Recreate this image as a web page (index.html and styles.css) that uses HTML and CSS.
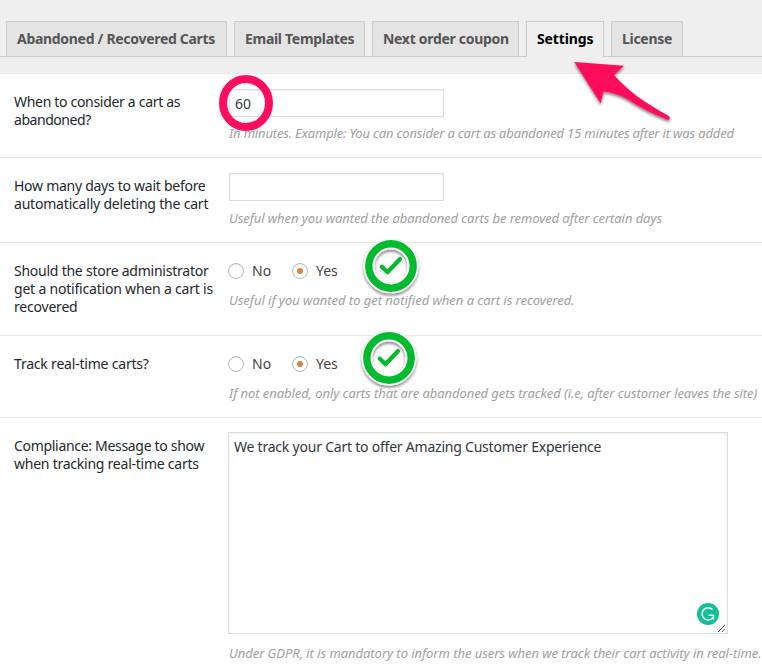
FILE: index.html
```html
<!DOCTYPE html>
<html lang="en">
<head>
<meta charset="utf-8">
<title>Settings</title>
<link rel="stylesheet" href="styles.css">
</head>
<body>
<nav class="tabs">
  <a class="tab tab-carts">Abandoned / Recovered Carts</a>
  <a class="tab tab-email">Email Templates</a>
  <a class="tab tab-coupon">Next order coupon</a>
  <a class="tab tab-settings active">Settings</a>
  <a class="tab tab-license">License</a>
</nav>
<main class="settings">
  <section class="row row-minutes">
    <div class="label"><span class="l1">When to consider a cart as</span><br><span class="l2">abandoned?</span></div>
    <div class="field">
      <input class="text" type="text" value="60">
      <p class="hint h1">In minutes. Example: You can consider a cart as abandoned 15 minutes after it was added</p>
    </div>
  </section>
  <section class="row row-days">
    <div class="label"><span class="l3">How many days to wait before</span><br><span class="l4">automatically deleting the cart</span></div>
    <div class="field">
      <input class="text" type="text">
      <p class="hint h2">Useful when you wanted the abandoned carts be removed after certain days</p>
    </div>
  </section>
  <section class="row row-notify">
    <div class="label"><span class="l5">Should the store administrator</span><br><span class="l6">get a notification when a cart is</span><br><span class="l7">recovered</span></div>
    <div class="field">
      <div class="radios"><i class="radio"></i><span class="no">No</span><i class="radio on"></i><span>Yes</span></div>
      <p class="hint h3">Useful if you wanted to get notified when a cart is recovered.</p>
    </div>
  </section>
  <section class="row row-track">
    <div class="label"><span class="l8">Track real-time carts?</span></div>
    <div class="field">
      <div class="radios"><i class="radio"></i><span class="no">No</span><i class="radio on"></i><span>Yes</span></div>
      <p class="hint h4">If not enabled, only carts that are abandoned gets tracked (i.e, after customer leaves the site)</p>
    </div>
  </section>
  <section class="row row-message">
    <div class="label"><span class="l9">Compliance: Message to show</span><br><span class="l10">when tracking real-time carts</span></div>
    <div class="field">
      <div class="area"><span class="message">We track your Cart to offer Amazing Customer Experience</span>
        <svg class="badge" width="22" height="22" viewBox="0 0 22 22"><circle cx="11" cy="11" r="11" fill="#11c096"/><path d="M15.6 6.6A6.100 6.100 0 1 0 16 14.600M11.600 12.300H16.400V16.400" fill="none" stroke="#fff" stroke-width="1.500"/></svg>
        <svg class="grip" width="9" height="9" viewBox="0 0 9 9"><path d="M1 8L8 1M5 8L8 5" stroke="#555" fill="none"/></svg>
      </div>
      <p class="hint h5">Under GDPR, it is mandatory to inform the users when we track their cart activity in real-time.</p>
    </div>
  </section>
</main>
<svg class="notes" width="762" height="671" viewBox="0 0 762 671">
  <defs>
    <filter id="shadow" x="-20%" y="-20%" width="140%" height="150%"><feDropShadow dx="0" dy="2" stdDeviation="1.6" flood-color="#000" flood-opacity=".5"/></filter>
    <g id="check">
      <g filter="url(#shadow)"><circle r="22" fill="none" stroke="#fff" stroke-width="11"/></g>
      <circle r="22.2" fill="none" stroke="#00bb2e" stroke-width="7.4"/>
      <path d="M-9.2 .8L-3.5 6.2L9 -7" fill="none" stroke="#00bb2e" stroke-width="4.2" stroke-linecap="round" stroke-linejoin="round"/>
    </g>
  </defs>
  <ellipse cx="246" cy="103" rx="23" ry="24" fill="none" stroke="#ff0d5c" stroke-width="8"/>
  <path filter="url(#shadow)" d="M574.3 62L624 65.8L614 75C628 91 645 103 669 116Q671 119 668 120Q645 111 627 99Q614 92 603.500 91.500L600.700 103.500Z" fill="#ff0d5c"/>
  <use href="#check" x="391" y="266"/>
  <use href="#check" x="389" y="358"/>
</svg>
</body>
</html>
```
FILE: styles.css
```css
* { box-sizing: border-box; }
body { margin: 0; width: 762px; height: 671px; overflow: hidden; position: relative; background: #fff; color: #23282d; font: 14px/18px "Noto Sans", sans-serif; white-space: nowrap; }
.tabs { height: 57px; padding: 21px 0 0 6px; display: flex; gap: 7px; background: #efefef; border-bottom: 1px solid #ccc; }
.tab { height: 35px; padding: 8px 0 0 10px; border: 1px solid #ccc; border-bottom: 0; background: #e4e4e4; color: #555; font-weight: 700; line-height: 18px; letter-spacing: -.3px; }
.tab.active { height: 36px; background: #efefef; color: #000; letter-spacing: -.12px; }
.tab-carts { width: 221px; }
.tab-email { width: 131px; }
.tab-coupon { width: 147px; }
.tab-settings { width: 78px; }
.tab-license { width: 72px; }
.settings { border-top: 16px solid #efefef; }
.row { display: flex; border-top: 1px solid #e6e6e6; }
.row-minutes { height: 84px; }
.row-days { height: 85px; }
.row-notify { height: 93px; }
.row-track { height: 82px; }
.row-message { height: 254px; }
.label { flex: none; width: 228px; padding: 19px 0 0 14px; }
.l1, .l9 { letter-spacing: -.31px; }
.l2 { letter-spacing: -.45px; }
.l3 { letter-spacing: -.27px; }
.l4, .l6, .l7, .l8 { letter-spacing: -.2px; }
.l5, .l10 { letter-spacing: -.24px; }
.field { flex: none; padding-top: 15px; }
.text { display: block; width: 215px; height: 28px; margin-left: 1px; border: 1px solid #ddd; padding: 0 5px; font: inherit; color: #32373c; box-shadow: inset 0 1px 2px rgba(0,0,0,.07); outline: 0; }
.hint { margin: 7px 0 0 1px; color: #a0a0a0; font-style: italic; font-size: 13px; line-height: 18px; }
.h1 { letter-spacing: -.16px; }
.h2 { letter-spacing: -.08px; }
.h3 { letter-spacing: -.03px; }
.h4 { letter-spacing: -.065px; }
.h5 { letter-spacing: -.05px; }
.row-days .hint { margin-top: 8px; }
.radios { display: flex; align-items: center; height: 26px; color: #444; }
.row-notify .hint, .row-track .hint { margin-top: 7px; }
.radio { width: 16px; height: 16px; margin-right: 8px; border: 1px solid #b4b9be; border-radius: 50%; box-shadow: inset 0 1px 2px rgba(0,0,0,.1); display: grid; place-items: center; }
.radio.on::after { content: ""; width: 6px; height: 6px; border-radius: 50%; background: #dd823b; }
.no { width: 40px; }
.row-message .field { padding-top: 14px; }
.area { position: relative; width: 500px; height: 202px; padding: 5px; border: 1px solid #ddd; box-shadow: inset 0 1px 2px rgba(0,0,0,.07); color: #32373c; }
.message { letter-spacing: -.22px; }
.badge { position: absolute; right: 8px; bottom: 8px; }
.grip { position: absolute; right: 1px; bottom: 0; }
.row-message .hint { margin-top: 10px; }
.notes { position: absolute; left: 0; top: 0; pointer-events: none; }
```
